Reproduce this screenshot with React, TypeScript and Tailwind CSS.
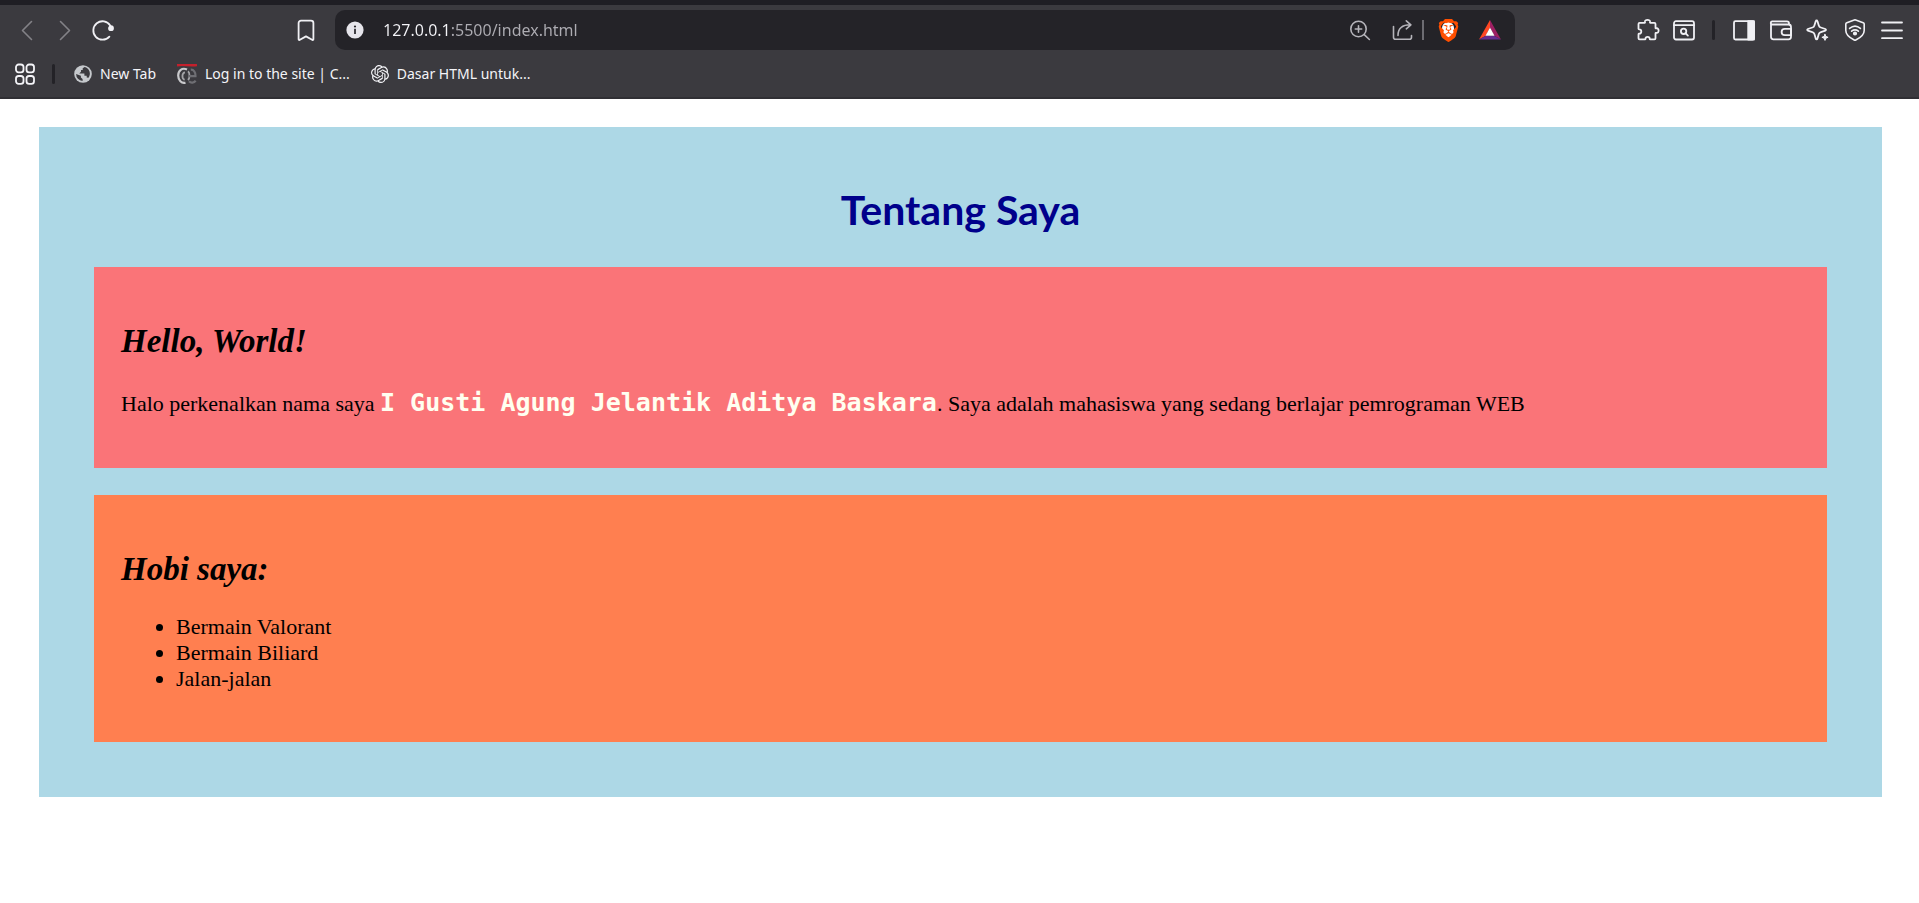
import type { ReactNode } from "react";
import { SiBrave, SiOpenai } from "react-icons/si";

type IconButtonProps = { label: string; className: string; children: ReactNode };

function IconButton({ label, className, children }: IconButtonProps) {
  return (
    <button
      type="button"
      aria-label={label}
      className={"flex h-10 shrink-0 items-center justify-center " + className}
    >
      {children}
    </button>
  );
}

function Icon({ children, width = 2 }: { children: ReactNode; width?: number }) {
  return (
    <svg
      viewBox="0 0 24 24"
      className="size-6"
      fill="none"
      stroke="currentColor"
      strokeWidth={width}
      strokeLinecap="round"
      strokeLinejoin="round"
      aria-hidden="true"
    >
      {children}
    </svg>
  );
}

function NavigationButtons() {
  return (
    <div className="flex w-[335px] shrink-0 items-center justify-between pr-[10px] pl-2 text-[#f0f0f4]">
      <div className="flex items-center">
        <IconButton label="Back" className="w-[38px] text-[#838287]">
          <Icon width={1.6}>
            <path d="M16.5 3.500 7.500 12.500l9 9" />
          </Icon>
        </IconButton>
        <IconButton label="Forward" className="w-[38px] text-[#838287]">
          <Icon width={1.6}>
            <path d="m7.500 3.500 9 9-9 9" />
          </Icon>
        </IconButton>
        <IconButton label="Reload" className="w-[38px]">
          <Icon width={1.8}>
            <path d="M19.200 7.400A9.200 9.200 0 1 0 18.400 18.600" />
            <circle cx="20" cy="10.200" r="2" fill="currentColor" />
          </Icon>
        </IconButton>
      </div>
      <IconButton label="Bookmark this page" className="w-[38px]">
        <Icon width={1.8}>
          <path d="M7 2.600h10a2.400 2.400 0 0 1 2.400 2.400v16.200a.8.8 0 0 1-1.300.6L12 18.400l-6.100 3.400a.8.8 0 0 1-1.300-.6V5A2.400 2.400 0 0 1 7 2.600Z" />
        </Icon>
      </IconButton>
    </div>
  );
}

function AddressBar() {
  return (
    <div className="flex h-10 min-w-0 flex-1 items-center rounded-[10px] bg-[#242328] pr-1 text-[#b5b4ba]">
      <IconButton label="View site information" className="w-10">
        <svg viewBox="0 0 18 18" className="size-[18px]" aria-hidden="true">
          <circle cx="9" cy="9" r="8.600" fill="#e6e5eb" />
          <circle cx="9" cy="5.500" r="1.100" fill="#242328" />
          <path d="M9 7.700v5.400" fill="none" stroke="#242328" strokeWidth="1.700" />
        </svg>
      </IconButton>
      <input
        type="text"
        aria-label="Address"
        defaultValue="127.0.0.1:5500/index.html"
        className="ml-2 h-10 min-w-0 flex-1 bg-[linear-gradient(to_right,#f4f4f8_68px,#aeadb3_68px)] bg-clip-text pb-px font-['Noto_Sans','Open_Sans',sans-serif] text-base text-transparent outline-none"
      />
      <IconButton label="Zoom" className="mr-[11px] w-8">
        <Icon width={1.6}>
          <circle cx="10.500" cy="11" r="7.700" />
          <path d="m16.200 16.700 5.200 4.800M10.500 7.800v6.400M7.300 11h6.400" />
        </Icon>
      </IconButton>
      <IconButton label="Share this page" className="w-8">
        <Icon width={1.6}>
          <path d="M2.500 8.500v10.800a2 2 0 0 0 2 2h14a2 2 0 0 0 2-2v-1.800" />
          <path d="M7 17.500C7 11 10.500 6.800 19.500 6.800M15.300 2.800l4.600 4-4.600 4" />
        </Icon>
      </IconButton>
      <span className="mx-[3px] h-5 w-[2px] shrink-0 bg-[#6d6c72]" />
      <IconButton label="Brave Shields" className="w-[42px]">
        <span className="grid size-6 place-items-center">
          <span className="col-start-1 row-start-1 h-4 w-3 rounded-full bg-white" />
          <SiBrave className="relative col-start-1 row-start-1 size-[23px] text-[#ff4f00]" aria-hidden="true" />
        </span>
      </IconButton>
      <IconButton label="Brave Rewards" className="w-[42px]">
        <svg viewBox="0 0 24 24" className="size-6" aria-hidden="true">
          <path d="M12 2 1 21.500l6.800-3.800L12 9.500Z" fill="#ff4724" />
          <path d="m12 2 11 19.500-6.800-3.800L12 9.500Z" fill="#9e1f63" />
          <path d="M1 21.500h22l-6.800-3.800H7.800Z" fill="#662d91" />
          <path d="m12 9.500 4.500 8.200h-9Z" fill="#fff" />
        </svg>
      </IconButton>
    </div>
  );
}

function BrowserActions() {
  return (
    <div className="flex w-[404px] shrink-0 items-center justify-end pr-[9px] text-[#f0f0f4]">
      <IconButton label="Extensions" className="w-[37px]">
        <Icon width={1.8}>
          <path d="M3.600 4.800h5c.5 0 .5-.4.4-.8C8.700 2.500 9.900 1.900 11.500 1.900s2.800.6 2.500 2.100c-.1.400-.1.800.4.800h4c.8 0 1.100.4 1.100 1.100v4c0 .5.4.5.800.4 1.500-.3 2.300.8 2.300 2.300s-.8 2.600-2.300 2.300c-.4-.1-.8-.1-.8.400v5c0 .8-.4 1.100-1.100 1.100h-4.200c-.4 0-.5-.3-.5-.7 0-1.200-.9-1.900-2.100-1.900s-2.100.7-2.100 1.900c0 .4-.1.700-.5.700H3.600c-.8 0-1.100-.4-1.100-1.100v-4.100c0-.4.300-.5.700-.5 1.300 0 2.100-.9 2.100-2.200s-.8-2.200-2.100-2.200c-.4 0-.7-.1-.7-.5V5.900c0-.8.400-1.100 1.100-1.100Z" />
        </Icon>
      </IconButton>
      <IconButton label="Search tabs" className="w-9">
        <Icon width={1.8}>
          <rect x="2" y="3.200" width="20" height="18.300" rx="2" />
          <path d="M2 7.200h20" />
          <circle cx="11.600" cy="13.300" r="2.700" />
          <path d="m13.700 15.400 2.200 2.200" />
        </Icon>
      </IconButton>
      <span className="mx-[10px] h-5 w-[3px] shrink-0 rounded-full bg-[#232227]" />
      <IconButton label="Side panel" className="w-[37px]">
        <Icon width={1.8}>
          <rect x="2" y="3.200" width="20" height="18.300" rx="1.500" />
          <path d="M16.200 3.200H22v18.300h-5.800Z" fill="currentColor" />
        </Icon>
      </IconButton>
      <IconButton label="Wallet" className="w-[37px]">
        <Icon width={1.8}>
          <path d="M2 5.500v13.300a2.500 2.500 0 0 0 2.500 2.500h15a2.500 2.500 0 0 0 2.500-2.500V9a2.500 2.500 0 0 0-2.500-2.500H3.200A1.300 1.300 0 0 1 3.500 3.400h14.400a2.100 2.100 0 0 1 2.100 2.100v1.200" />
          <path d="M22 10.800h-6.200a3.200 3.200 0 0 0 0 6.400H22Z" />
        </Icon>
      </IconButton>
      <IconButton label="Leo AI" className="w-[37px]">
        <Icon width={1.8}>
          <path d="M10.600 2.300c.4 0 .7.200.8.600l1.400 4.600c.3 1 1 1.700 2 2l4.600 1.500c.8.300.8 1.400 0 1.600l-4.600 1.500c-1 .3-1.700 1-2 2l-1.400 4.600c-.2.800-1.400.8-1.600 0l-1.400-4.600c-.3-1-1-1.700-2-2l-4.600-1.500c-.8-.2-.8-1.300 0-1.600L6.400 9.500c1-.3 1.700-1 2-2l1.400-4.600c.1-.4.4-.6.800-.6Z" />
          <path d="m19 16.300.9 2.100 2.200.9-2.200.9-.9 2.200-.9-2.200-2.200-.9 2.200-.9Z" fill="currentColor" strokeWidth="1" />
        </Icon>
      </IconButton>
      <IconButton label="VPN" className="w-[37px]">
        <Icon width={1.6}>
          <path d="M12 1.800 20.200 4.700a1.500 1.500 0 0 1 1 1.400v6.400c0 4.200-3.900 7.300-8.400 9.500a1.800 1.800 0 0 1-1.600 0c-4.500-2.200-8.400-5.300-8.400-9.500V6.100a1.500 1.500 0 0 1 1-1.400Z" />
          <path d="M6.600 10.400c3.300-2.800 7.500-2.800 10.800 0M8.600 13.200c2.100-1.600 4.700-1.600 6.800 0" />
          <circle cx="12" cy="15.500" r="1.300" fill="currentColor" />
        </Icon>
      </IconButton>
      <IconButton label="Menu" className="w-[37px]">
        <Icon width={1.8}>
          <path d="M2 4.500h20M2 12.500h20M2 20.200h20" />
        </Icon>
      </IconButton>
    </div>
  );
}

function BookmarksBar() {
  return (
    <nav
      aria-label="Bookmarks"
      className="flex h-[47px] items-center pl-[15px] font-['Noto_Sans','Open_Sans',sans-serif] text-sm text-[#f4f4f8]"
    >
      <button type="button" aria-label="All bookmarks" className="shrink-0">
        <svg
          viewBox="0 0 20 22"
          className="h-[22px] w-5"
          fill="none"
          stroke="currentColor"
          strokeWidth="1.800"
          aria-hidden="true"
        >
          <rect x="1" y="1.500" width="7.500" height="7.800" rx="2.600" />
          <rect x="11.500" y="1.500" width="7.500" height="7.800" rx="2.600" />
          <rect x="1" y="13" width="7.500" height="7.800" rx="2.600" />
          <rect x="11.500" y="13" width="7.500" height="7.800" rx="2.600" />
        </svg>
      </button>
      <span className="mr-[19px] ml-[17px] h-5 w-[3px] shrink-0 rounded-full bg-[#232227]" />
      <a href="#new-tab" className="mr-[21px] flex items-center gap-2 whitespace-nowrap">
        <svg viewBox="0 0 18 18" className="size-[18px]" aria-hidden="true">
          <circle cx="9" cy="9" r="8.800" fill="#c5c8cc" />
          <path
            d="M10.600 1.900 8.700 3.200v1.700H7v1.800L5.200 8.400h5.200v2.300h2.300v1.700l1.800.3a6.900 6.900 0 0 0-3.900-10.800ZM2.100 8.900l4.800 1.800v1.700l1.700 1.700v1.800a6.900 6.900 0 0 1-6.500-7Z"
            fill="#3b3a3f"
          />
        </svg>
        New Tab
      </a>
      <a href="#login" className="mr-[21px] flex items-center gap-2 whitespace-nowrap">
        <svg viewBox="0 0 20 20" className="size-5" fill="none" aria-hidden="true">
          <path d="M0 1.200c6-1 13 .6 20-.2" stroke="#c4202c" strokeWidth="2.400" />
          <path d="M10 5.500c-5-2.200-8.800 1-8.800 6 0 4.800 3.300 8 7.300 7.300" stroke="#c9c9cc" strokeWidth="2.200" />
          <path d="M8 8.300c-3 .2-3.700 6.300-.4 7.600M11 7.200c2 1.600 2 6.800 0 8.800" stroke="#a3a3a7" strokeWidth="1.800" />
          <path d="M11.500 12.200h7c.3-4-2-6.700-4.700-6.500M12 17.300c2 2 5 1.500 6.700-.6" stroke="#6f6f74" strokeWidth="2.200" />
        </svg>
        Log in to the site | C...
      </a>
      <a href="#dasar-html" className="flex items-center gap-2 whitespace-nowrap">
        <SiOpenai className="size-[18px]" aria-hidden="true" />
        Dasar HTML untuk...
      </a>
    </nav>
  );
}

export default function App() {
  return (
    <div className="min-h-screen bg-white text-black">
      <header className="border-t-[5px] border-b-2 border-t-[#1f1e24] border-b-[#302f34] bg-[#3b3a3f]">
        <div className="flex pt-[5px]">
          <NavigationButtons />
          <AddressBar />
          <BrowserActions />
        </div>
        <BookmarksBar />
      </header>

      <main className="mt-7 mr-[37px] ml-[39px] bg-[#add8e6] p-[55px] font-['Liberation_Serif',serif] text-[22px] leading-[26px]">
        <h1 className="mb-[29px] text-center font-['Lato',sans-serif] text-[41px] leading-[56px] font-bold text-[#00008b]">
          Tentang Saya
        </h1>

        <section className="mb-[27px] bg-[#fa7478] px-[27px] pt-[55px] pb-[47px]">
          <h2 className="mb-[26px] text-[33px] leading-[38px] font-bold italic">Hello, World!</h2>
          <p className="leading-[34px]">
            Halo perkenalkan nama saya{" "}
            <strong className="font-['DejaVu_Sans_Mono',monospace] text-[25px] font-bold text-[#fffff0]">
              I Gusti Agung Jelantik Aditya Baskara
            </strong>
            . Saya adalah mahasiswa yang sedang berlajar pemrograman WEB
          </p>
        </section>

        <section className="bg-[#ff7f50] px-[27px] pt-[55px] pb-[50px]">
          <h2 className="mb-[26px] text-[33px] leading-[38px] font-bold italic">Hobi saya:</h2>
          <ul className="list-disc pl-[55px]">
            <li>Bermain Valorant</li>
            <li>Bermain Biliard</li>
            <li>Jalan-jalan</li>
          </ul>
        </section>
      </main>
    </div>
  );
}
